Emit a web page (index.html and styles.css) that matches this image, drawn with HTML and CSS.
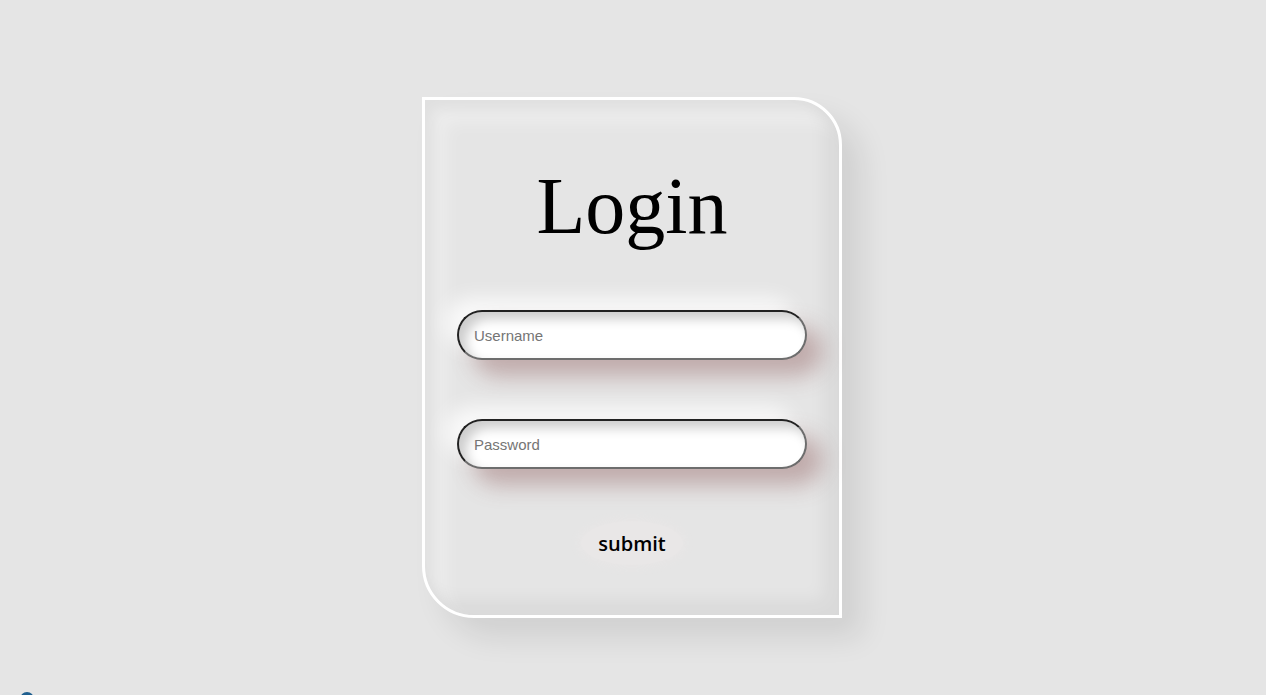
FILE: index.html
```html
<!DOCTYPE html>
<html lang="en">
<head>
<meta charset="utf-8">
<title>Login</title>
<link rel="stylesheet" href="styles.css">
</head>
<body>
<main class="page">
  <form class="card">
    <h1 class="title">Login</h1>
    <input class="field" type="text" placeholder="Username">
    <input class="field" type="password" placeholder="Password">
    <button class="submit" type="button">submit</button>
  </form>
</main>
<div class="float-dot"></div>
</body>
</html>
```

FILE: styles.css
```css
html, body {
  margin: 0;
  padding: 0;
  height: 100%;
  background: #e5e5e5;
  overflow: hidden;
}
.page {
  display: flex;
  justify-content: center;
  padding: 97px 2px 0 0;
}
.card {
  width: 414px;
  height: 515px;
  border: 3px solid #ffffff;
  border-radius: 0 48px 0 52px;
  background: #e5e5e5;
  box-shadow:
    20px 20px 30px rgba(0, 0, 0, 0.09),
    inset 8px 10px 14px rgba(0, 0, 0, 0.06),
    inset 20px 22px 18px rgba(255, 255, 255, 0.35),
    inset -14px -14px 18px rgba(0, 0, 0, 0.05);
  display: flex;
  flex-direction: column;
  align-items: center;
  box-sizing: content-box;
}
.title {
  margin: 62px 0 0;
  font-family: "Liberation Serif", "Times New Roman", serif;
  font-weight: 400;
  font-size: 80px;
  line-height: 88px;
  color: #000;
}
.field {
  margin-top: 60px;
  width: 350px;
  height: 50px;
  box-sizing: border-box;
  border: 2px solid;
  border-color: #222 #6d6d6d #6d6d6d #222;
  border-radius: 25px;
  background: #fff;
  padding: 0 15px;
  font-family: "Liberation Sans", Arial, sans-serif;
  font-size: 15px;
  color: #333;
  outline: none;
  box-shadow:
    inset 7px 7px 12px rgba(0, 0, 0, 0.2),
    16px 16px 22px rgba(140, 90, 90, 0.42),
    -12px -12px 20px rgba(255, 255, 255, 0.8);
}
.field + .field {
  margin-top: 59px;
}
.field::placeholder {
  color: #757575;
}
.submit {
  margin-top: 52px;
  width: 102px;
  height: 44px;
  border: none;
  border-radius: 50%;
  background: #e9e7e7;
  box-shadow: 0 0 8px 3px #e8e6e6;
  font-family: "Open Sans", "Noto Sans", sans-serif;
  font-weight: 600;
  font-size: 20px;
  color: #000;
  padding: 0;
  cursor: pointer;
}
.float-dot {
  position: fixed;
  left: 20px;
  top: 692px;
  width: 14px;
  height: 14px;
  border-radius: 50%;
  background: #1f5f8f;
}
```
